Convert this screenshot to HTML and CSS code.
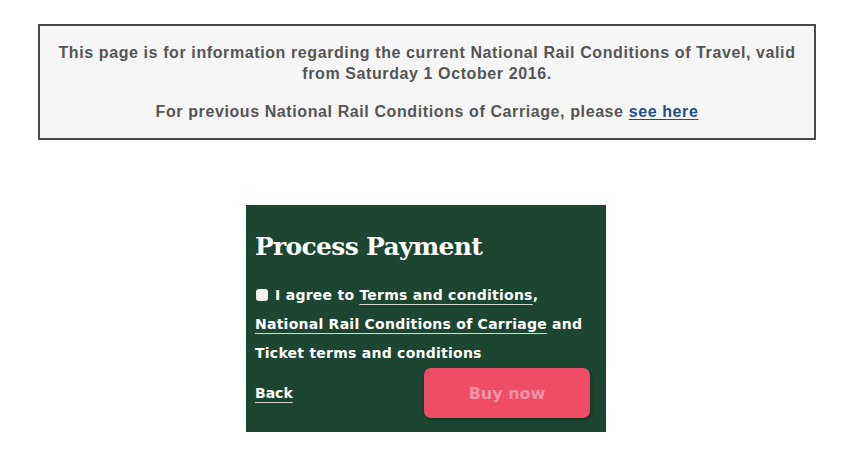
FILE: index.html
```html
<!DOCTYPE html>
<html>
<head>
<meta charset="utf-8">
<link rel="stylesheet" href="styles.css">
</head>
<body>
<div class="notice">
  <p>This page is for information regarding the current National Rail Conditions of Travel, valid from Saturday 1 October 2016.</p>
  <p>For previous National Rail Conditions of Carriage, please <a href="#" class="blue">see here</a></p>
</div>
<div class="panel">
  <h2>Process Payment</h2>
  <p class="agree"><input type="checkbox" class="check"> I agree to <a href="#">Terms and conditions</a>, <a href="#">National Rail Conditions of Carriage</a> and Ticket terms and conditions</p>
  <div class="actions">
    <a href="#" class="back">Back</a>
    <button class="buy">Buy now</button>
  </div>
</div>
</body>
</html>
```

FILE: styles.css
```css
html, body {
  margin: 0;
  padding: 0;
  background: #fff;
}
body {
  font-family: "Liberation Sans", Arial, sans-serif;
  padding-top: 24px;
}
.notice {
  box-sizing: border-box;
  margin-left: 38px;
  width: 778px;
  height: 116px;
  border: 2px solid #4a4a4a;
  background: #f6f6f6;
  padding: 16px 14px 0;
  text-align: center;
  color: #555;
  font-weight: bold;
  font-size: 16px;
  letter-spacing: 0.6px;
  line-height: 21px;
}
.notice p {
  margin: 0 0 17px;
}
.blue {
  color: #1f4e8c;
  text-decoration: underline;
  text-underline-offset: 2px;
}
.panel {
  box-sizing: border-box;
  margin: 65px 0 0 246px;
  width: 360px;
  height: 227px;
  background: #1c4532;
  padding: 27px 16px 13px 9px;
  color: #fff;
}
.panel h2 {
  margin: 0;
  font-family: "DejaVu Serif", serif;
  font-weight: bold;
  font-size: 25px;
  line-height: 30px;
  letter-spacing: -0.7px;
}
.agree {
  margin: 19px 0 0;
  font-family: "DejaVu Sans", sans-serif;
  font-size: 14px;
  font-weight: bold;
  letter-spacing: 0.25px;
  line-height: 29px;
}
.agree a, .back {
  color: #fff;
  text-decoration: underline;
  text-decoration-thickness: 1px;
  text-decoration-color: rgba(255,255,255,0.8);
  text-underline-offset: 4px;
}
.check {
  appearance: none;
  -webkit-appearance: none;
  width: 12px;
  height: 12px;
  margin: 0 2px 0 1px;
  background: #f2f2f2;
  border-radius: 3px;
  vertical-align: -1px;
}
.actions {
  display: flex;
  justify-content: space-between;
  align-items: center;
}
.back {
  font-family: "DejaVu Sans", sans-serif;
  font-size: 14px;
  font-weight: bold;
}
.buy {
  width: 166px;
  height: 50px;
  border: none;
  border-radius: 7px;
  background: #ef4d67;
  color: #f492a6;
  font-family: "DejaVu Sans", sans-serif;
  font-weight: bold;
  font-size: 16px;
  box-shadow: 1px 2px 3px rgba(0,0,0,0.35);
}
```
